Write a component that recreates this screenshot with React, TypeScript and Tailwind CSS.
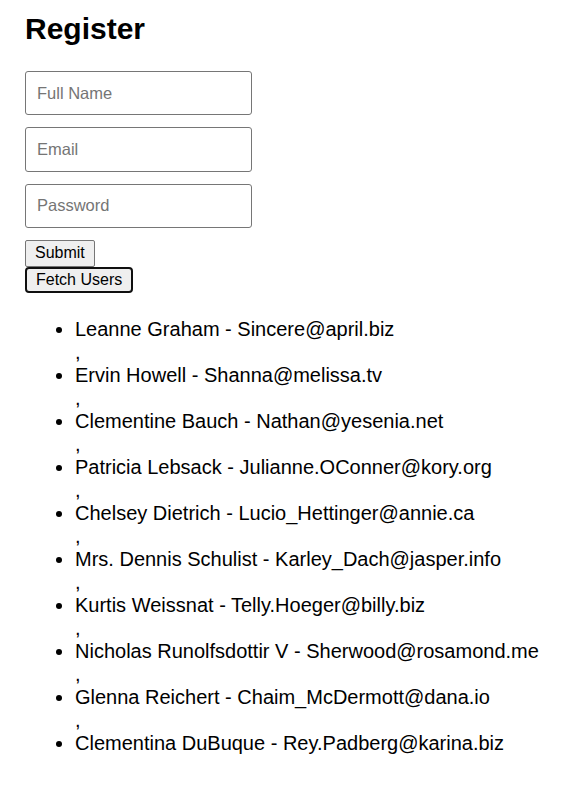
import { Fragment } from "react";

type User = { id: number; name: string; email: string };

const users: User[] = [
	{ id: 1, name: "Leanne Graham", email: "Sincere@april.biz" },
	{ id: 2, name: "Ervin Howell", email: "Shanna@melissa.tv" },
	{ id: 3, name: "Clementine Bauch", email: "Nathan@yesenia.net" },
	{ id: 4, name: "Patricia Lebsack", email: "Julianne.OConner@kory.org" },
	{ id: 5, name: "Chelsey Dietrich", email: "Lucio_Hettinger@annie.ca" },
	{ id: 6, name: "Mrs. Dennis Schulist", email: "Karley_Dach@jasper.info" },
	{ id: 7, name: "Kurtis Weissnat", email: "Telly.Hoeger@billy.biz" },
	{ id: 8, name: "Nicholas Runolfsdottir V", email: "Sherwood@rosamond.me" },
	{ id: 9, name: "Glenna Reichert", email: "Chaim_McDermott@dana.io" },
	{ id: 10, name: "Clementina DuBuque", email: "Rey.Padberg@karina.biz" },
];

export default function App() {
	return (
		<div className="min-h-[794px] bg-white px-[25px] pt-[10px] font-['Liberation_Sans',Arial,sans-serif] text-black">
			<h1 className="mb-[24px] text-[30px] font-bold leading-[37px]">Register</h1>

			{/* form */}
			<form className="flex flex-col items-start" onSubmit={(e) => e.preventDefault()}>
				<input
					type="text"
					placeholder="Full Name"
					className="mb-[12px] box-border h-[44.4px] w-[227px] rounded-[3px] border border-[#767676] px-[11px] text-[16.5px] placeholder:text-[#757575] outline-none"
				/>
				<input
					type="email"
					placeholder="Email"
					className="mb-[12px] box-border h-[44.4px] w-[227px] rounded-[3px] border border-[#767676] px-[11px] text-[16.5px] placeholder:text-[#757575] outline-none"
				/>
				<input
					type="password"
					placeholder="Password"
					className="mb-[12px] box-border h-[44.4px] w-[227px] rounded-[3px] border border-[#767676] px-[11px] text-[16.5px] placeholder:text-[#757575] outline-none"
				/>
				<button
					type="submit"
					className="rounded-[2px] border border-[#767676] bg-[#efefef] px-[9px] py-[3px] text-[16px] leading-[18.4px]"
				>
					Submit
				</button>
			</form>
			<button
				type="button"
				className="block rounded-[4px] border-2 border-[#101010] bg-[#efefef] px-[9px] py-[2px] text-[16px] leading-[18.4px]"
			>
				Fetch Users
			</button>

			{/* users */}
			<ul className="mt-[25px] list-disc pl-[50px] text-[20px] leading-[23px]">
				{users.map((u, i) => (
					<Fragment key={u.id}>
						<li>
							{u.name} - {u.email}
						</li>
						{i < users.length - 1 && ","}
					</Fragment>
				))}
			</ul>
		</div>
	);
}
